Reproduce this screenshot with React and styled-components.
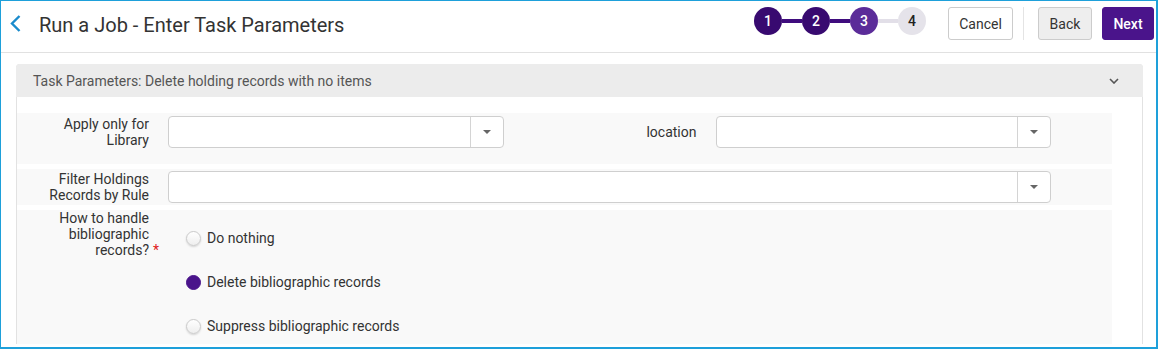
import React from "react";
import styled, { createGlobalStyle } from "styled-components";

const Global = createGlobalStyle`
  html, body { margin: 0; padding: 0; background: #fff; }
  body { font-family: Roboto, "Noto Sans", Arial, sans-serif; color: #333; }
  * { box-sizing: border-box; }
`;

const Frame = styled.div`
  width: 1158px;
  height: 349px;
  border: 1px solid #1ea0da;
  border-right-width: 2px;
  border-bottom-width: 2px;
  overflow: hidden;
  background: #fff;
`;

const Header = styled.header`
  height: 52px;
  border-bottom: 1px solid #e1e1e1;
  display: flex;
  align-items: center;
  padding: 0 2px 6px 9px;
`;

const BackLink = styled.button`
  border: 0;
  background: none;
  padding: 0;
  width: 12px;
  height: 17px;
  display: flex;
  cursor: pointer;
`;

const Title = styled.h1`
  margin: 0 0 0 17px;
  font-size: 20px;
  font-weight: 400;
  color: #333;
  flex: 1;
  line-height: 24px;
  padding-top: 2px;
`;

const Stepper = styled.ol`
  display: flex;
  align-items: center;
  list-style: none;
  margin: -5px 22px 0 0;
  padding: 0;
`;

const Step = styled.li`
  width: 28px;
  height: 28px;
  border-radius: 50%;
  display: flex;
  align-items: center;
  justify-content: center;
  font-size: 14px;
  font-weight: 500;
  color: ${(p) => (p.$state === "todo" ? "#222" : "#fff")};
  background: ${(p) =>
    p.$state === "done" ? "#380a70" : p.$state === "current" ? "#5b2c99" : "#e5e3ea"};
`;

const Connector = styled.span`
  width: 20px;
  height: 4px;
  background: ${(p) => (p.$done ? "#3f0c7e" : "#e2dfe8")};
`;

const Button = styled.button`
  height: 33px;
  width: ${(p) => p.$w}px;
  border-radius: 3px;
  font-family: inherit;
  font-size: 14px;
  font-weight: ${(p) => (p.$variant === "primary" ? 500 : 400)};
  cursor: pointer;
  padding: 0;
  color: ${(p) => (p.$variant === "primary" ? "#fff" : "#333")};
  background: ${(p) =>
    p.$variant === "primary" ? "#4a148b" : p.$variant === "secondary" ? "#eeeeee" : "#fff"};
  border: 1px solid ${(p) => (p.$variant === "primary" ? "#4a148b" : "#cccccc")};
`;

const Divider = styled.span`
  width: 1px;
  height: 33px;
  background: #e4e4e4;
  margin: 0 14px 0 10px;
`;

const ButtonGroup = styled.div`
  display: flex;
  align-items: center;
  gap: 10px;
`;

const Content = styled.main`
  padding: 11px 13px 0 15px;
`;

const Panel = styled.section`
  border: 1px solid #e2e2e2;
  border-bottom: 0;
  border-radius: 4px 4px 0 0;
`;

const PanelHeader = styled.div`
  height: 33px;
  background: #ececec;
  margin: -1px -1px 0;
  border-radius: 4px 4px 0 0;
  display: flex;
  align-items: center;
  justify-content: space-between;
  padding: 0 24px 0 17px;
  font-size: 14px;
  color: #555;
`;

const PanelBody = styled.div`
  padding: 16px 30px 0 0;
  display: flex;
  flex-direction: column;
  gap: 5px;
`;

const Row = styled.div`
  background: #f9f9f9;
  display: grid;
  grid-template-columns: ${(p) => (p.$cols === 2 ? "1fr 1fr" : "1fr")};
  padding: ${(p) => p.$pad};
  height: ${(p) => p.$h}px;
  align-items: ${(p) => (p.$top ? "start" : "center")};
`;

const FieldGroup = styled.div`
  display: flex;
  align-items: ${(p) => (p.$top ? "flex-start" : "center")};
  padding-right: 61px;
`;

const Label = styled.label`
  width: 151px;
  flex: none;
  padding: 0 19px 0 24px;
  text-align: right;
  font-size: 14px;
  line-height: 16px;
  color: #333;
`;

const Required = styled.span`
  position: relative;
`;

const Star = styled.span`
  position: absolute;
  left: calc(100% + 4px);
  top: 0;
  color: #e0201a;
`;

const Select = styled.div`
  flex: 1;
  height: 32px;
  border: 1px solid #cfcfcf;
  border-radius: 4px;
  background: #fff;
  display: flex;
  justify-content: flex-end;
`;

const Caret = styled.span`
  width: 33px;
  border-left: 1px solid #d4d4d4;
  display: flex;
  align-items: center;
  justify-content: center;
  &::after {
    content: "";
    border-left: 4px solid transparent;
    border-right: 4px solid transparent;
    border-top: 4px solid #666;
  }
`;

const RadioGroup = styled.div`
  display: flex;
  flex-direction: column;
  gap: 22px;
  padding: 17px 0 0 18px;
`;

const RadioItem = styled.label`
  display: flex;
  align-items: center;
  gap: 6px;
  height: 22px;
  font-size: 14px;
  color: #333;
`;

const RadioDot = styled.span`
  width: 15px;
  height: 15px;
  border-radius: 50%;
  flex: none;
  background: ${(p) => (p.$checked ? "#4a148b" : "linear-gradient(#ffffff, #eeeeee)")};
  border: 1px solid ${(p) => (p.$checked ? "#4a148b" : "#cacaca")};
  box-shadow: ${(p) => (p.$checked ? "none" : "0 1px 2px rgba(0,0,0,0.15)")};
`;

const steps = [
  { n: 1, s: "done" },
  { n: 2, s: "done" },
  { n: 3, s: "current" },
  { n: 4, s: "todo" },
];

const radios = [
  { label: "Do nothing", checked: false },
  { label: "Delete bibliographic records", checked: true },
  { label: "Suppress bibliographic records", checked: false },
];

export default function App() {
  return (
    <>
      <Global />
      <Frame>
        <Header>
          <BackLink aria-label="Back">
            <svg width="12" height="17" viewBox="0 0 12 17">
              <polyline points="9.5,1 2,8.5 9.5,16" fill="none" stroke="#1a8bcc" strokeWidth="2.4" />
            </svg>
          </BackLink>
          <Title>Run a Job - Enter Task Parameters</Title>
          <Stepper>
            {steps.map((st, i) => (
              <React.Fragment key={st.n}>
                {i > 0 && <Connector $done={st.s !== "todo"} />}
                <Step $state={st.s}>{st.n}</Step>
              </React.Fragment>
            ))}
          </Stepper>
          <ButtonGroup>
            <Button $w={65}>Cancel</Button>
          </ButtonGroup>
          <Divider />
          <ButtonGroup>
            <Button $w={54} $variant="secondary">Back</Button>
            <Button $w={52} $variant="primary">Next</Button>
          </ButtonGroup>
        </Header>
        <Content>
          <Panel>
            <PanelHeader>
              <span>Task Parameters: Delete holding records with no items</span>
              <svg width="10" height="6" viewBox="0 0 10 6">
                <polyline points="1,1 5,5 9,1" fill="none" stroke="#555" strokeWidth="1.6" />
              </svg>
            </PanelHeader>
            <PanelBody>
              <Row $cols={2} $pad="3px 0 16px" $h={51}>
                <FieldGroup>
                  <Label>Apply only for Library</Label>
                  <Select><Caret /></Select>
                </FieldGroup>
                <FieldGroup>
                  <Label>location</Label>
                  <Select><Caret /></Select>
                </FieldGroup>
              </Row>
              <Row $pad="2px 0 2px" $h={36}>
                <FieldGroup>
                  <Label>Filter Holdings Records by Rule</Label>
                  <Select><Caret /></Select>
                </FieldGroup>
              </Row>
              <Row $pad="0" $h={134} $top>
                <FieldGroup $top>
                  <Label>
                    How to handle bibliographic{" "}
                    <Required>
                      records?<Star>*</Star>
                    </Required>
                  </Label>
                  <RadioGroup>
                    {radios.map((r) => (
                      <RadioItem key={r.label}>
                        <RadioDot $checked={r.checked} />
                        {r.label}
                      </RadioItem>
                    ))}
                  </RadioGroup>
                </FieldGroup>
              </Row>
            </PanelBody>
          </Panel>
        </Content>
      </Frame>
    </>
  );
}
